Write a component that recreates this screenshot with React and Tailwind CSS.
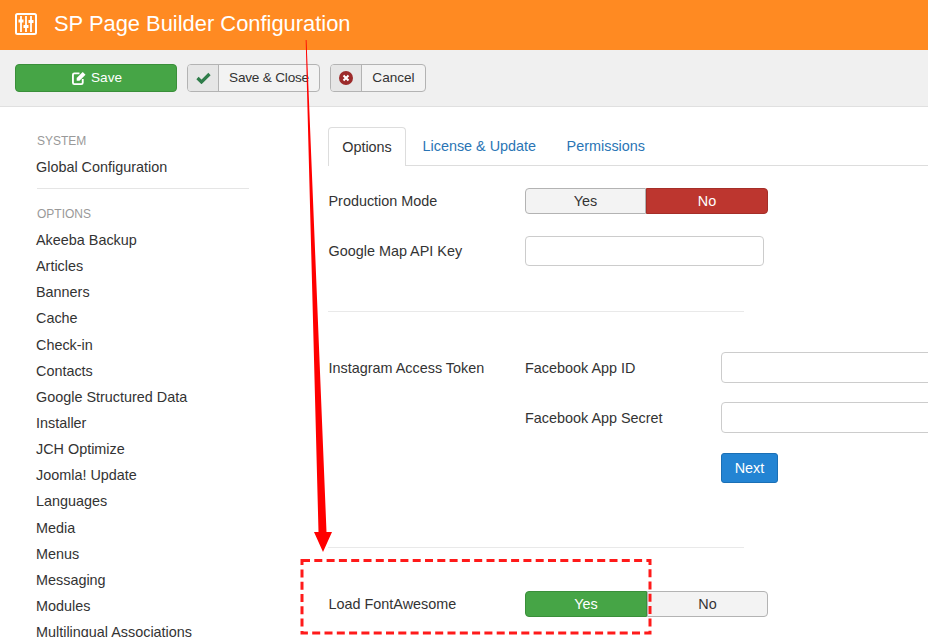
const sidebarItems = [
    'Akeeba Backup', 'Articles', 'Banners', 'Cache', 'Check-in', 'Contacts',
    'Google Structured Data', 'Installer', 'JCH Optimize', 'Joomla! Update',
    'Languages', 'Media', 'Menus', 'Messaging', 'Modules', 'Multilingual Associations',
];

function SlidersIcon() {
    return (
        <svg width="22" height="22" viewBox="0 0 22 22" fill="none" stroke="white">
            <rect x="1" y="1" width="20" height="20" rx="1.5" strokeWidth="2" />
            <path d="M6 3V19M11 3V19M16 3V19" strokeWidth="1.8" />
            <path d="M3.5 8H8.5M8.5 13.5H13.5M13.5 8.5H18.5" strokeWidth="3" />
        </svg>
    );
}

function EditIcon() {
    return (
        <svg width="14" height="14" viewBox="0 0 15 15" fill="none">
            <path d="M8 2.5H2.5Q1 2.5 1 4V12.5Q1 14 2.5 14H10Q11.5 14 11.5 12.5V8.5" stroke="white" strokeWidth="2" />
            <path d="M5 7.5L11.5 1L14.5 4L8 10.5H5Z" fill="white" />
        </svg>
    );
}

function CheckIcon() {
    return (
        <svg width="15" height="12" viewBox="0 0 15 12" fill="none">
            <path d="M1.5 6L5.5 10L13.5 2" stroke="#2f7d4a" strokeWidth="3.2" />
        </svg>
    );
}

function Toggle({ yesActive }) {
    return (
        <div className="flex h-[26px] w-[243px]">
            <div className={`flex items-center justify-center pt-[2px] rounded-l-[4px] border ${yesActive ? 'w-[122px] bg-[#46a546] border-[#3a8f3a] text-white' : 'w-[121px] bg-[#f3f3f3] border-[#b3b3b3] text-[#333]'}`}>Yes</div>
            <div className={`flex-1 flex items-center justify-center pt-[2px] rounded-r-[4px] border ${yesActive ? 'bg-[#f3f3f3] border-[#b3b3b3] text-[#333]' : 'bg-[#bd362f] border-[#a52e28] text-white'}`}>No</div>
        </div>
    );
}

export default function App() {
    return (
        <div className="relative w-[928px] h-[637px] overflow-hidden bg-white text-[#333] font-['Liberation_Sans',Arial,sans-serif] text-[14.4px]">
            <header className="h-[50px] bg-[#ff8a22] flex items-center pl-[15px] pb-[2px] gap-[17px] text-white">
                <SlidersIcon />
                <h1 className="text-[21.9px] font-normal">SP Page Builder Configuration</h1>
            </header>

            <div className="h-[57px] bg-[#f0f0f0] border-b border-[#e0e0e0] flex items-center pl-[15px] pb-[1px] text-[13.6px]">
                <button className="w-[162px] h-[28px] rounded-[4px] bg-[#46a546] border border-[#3a8f3a] text-white flex items-center justify-center gap-[5px] pl-[2px]">
                    <EditIcon />
                    <span className="pt-[2px]">Save</span>
                </button>
                <button className="ml-[10px] w-[133px] h-[28px] rounded-[4px] bg-[#f3f3f3] border border-[#b3b3b3] flex items-center overflow-hidden">
                    <span className="w-[31px] h-full bg-[#e6e6e6] border-r border-[#b3b3b3] flex items-center justify-center"><CheckIcon /></span>
                    <span className="flex-1 text-center pt-[2px] tracking-[-0.2px]">Save &amp; Close</span>
                </button>
                <button className="ml-[10px] w-[96px] h-[28px] rounded-[4px] bg-[#f3f3f3] border border-[#b3b3b3] flex items-center overflow-hidden">
                    <span className="w-[31px] h-full bg-[#e6e6e6] border-r border-[#b3b3b3] flex items-center justify-center">
                        <svg width="14" height="14" viewBox="0 0 14 14">
                            <circle cx="7" cy="7" r="7" fill="#9c2a2a" />
                            <path d="M4.5 4.5L9.5 9.5M9.5 4.5L4.5 9.5" stroke="white" strokeWidth="2" />
                        </svg>
                    </span>
                    <span className="flex-1 text-center pt-[2px]">Cancel</span>
                </button>
            </div>

            <div className="flex">
                <aside className="w-[328px] shrink-0 pl-[36px] pt-[27px]">
                    <div className="text-[12px] leading-[14px] text-[#999] h-[14px] pl-[1px]">SYSTEM</div>
                    <div className="leading-[26px] mt-[6px]">Global Configuration</div>
                    <div className="ml-[1px] w-[212px] border-t border-[#e5e5e5] mt-[8px] mb-[18px]"></div>
                    <div className="text-[12px] leading-[14px] text-[#999] pl-[1px]">OPTIONS</div>
                    <ul className="mt-[6px]">
                        {sidebarItems.map(item => (
                            <li key={item} className="h-[26.15px] leading-[26px] whitespace-nowrap">{item}</li>
                        ))}
                    </ul>
                </aside>

                <main className="flex-1 pt-[20px]">
                    <div className="flex h-[39px] border-b border-[#ddd]">
                        <div className="w-[78px] h-[39px] bg-white border border-b-0 border-[#ddd] rounded-t-[4px] flex items-center justify-center pt-[2px]">Options</div>
                        <div className="ml-[16.5px] flex items-center pt-[2px] text-[#2a75b5]">License &amp; Update</div>
                        <div className="ml-[30.5px] flex items-center pt-[2px] text-[#2a75b5]">Permissions</div>
                    </div>

                    <div className="mt-[22px] flex items-center h-[26px]">
                        <label className="w-[197px] pt-[2px] pl-[0.5px]">Production Mode</label>
                        <Toggle yesActive={false} />
                    </div>
                    <div className="mt-[22px] flex items-center h-[30px]">
                        <label className="w-[197px] pt-[2px] pl-[0.5px]">Google Map API Key</label>
                        <input className="w-[239px] h-[30px] border border-[#ccc] rounded-[4px]" />
                    </div>

                    <div className="w-[416px] border-t border-[#e9e9e9] mt-[45px]"></div>

                    <div className="mt-[40px] flex">
                        <label className="w-[197px] leading-[32px] pl-[0.5px]">Instagram Access Token</label>
                        <div>
                            <div className="flex items-center h-[31px]">
                                <label className="w-[196px] pt-[2px]">Facebook App ID</label>
                                <input className="w-[239px] h-[31px] border border-[#ccc] rounded-[4px]" />
                            </div>
                            <div className="mt-[19px] flex items-center h-[31px]">
                                <label className="w-[196px] pt-[2px]">Facebook App Secret</label>
                                <input className="w-[239px] h-[31px] border border-[#ccc] rounded-[4px]" />
                            </div>
                            <button className="block ml-[196px] mt-[20px] pt-[2px] w-[57px] h-[30px] rounded-[3px] bg-[#2384d3] border border-[#1a6fb5] text-white">Next</button>
                        </div>
                    </div>

                    <div className="w-[416px] border-t border-[#e9e9e9] mt-[64px]"></div>

                    <div className="mt-[43px] flex items-center h-[26px]">
                        <label className="w-[197px] pt-[2px] pl-[0.5px]">Load FontAwesome</label>
                        <Toggle yesActive />
                    </div>
                </main>
            </div>

            {/* annotation drawn on top of the screenshot */}
            <svg className="absolute left-0 top-0 pointer-events-none" width="928" height="637">
                <polygon points="305.7,40 306.5,40 326.5,532 332,532 323,552 314,532 318.5,532" fill="#ff0000" />
                <rect x="302" y="560.5" width="348" height="72.5" fill="none" stroke="#ff1a1a" strokeWidth="3" strokeDasharray="8 4.3" />
            </svg>
        </div>
    );
}
